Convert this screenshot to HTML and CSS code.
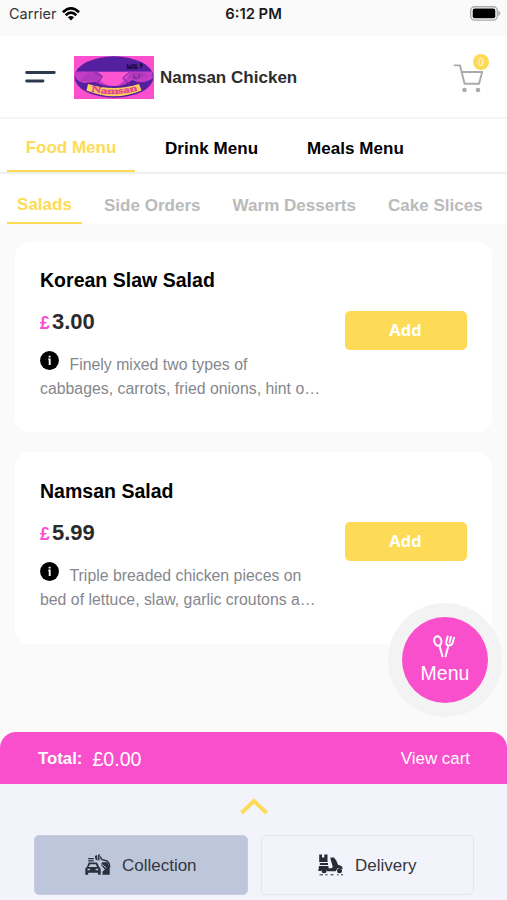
FILE: index.html
```html
<!DOCTYPE html>
<html lang="en">
<head>
<meta charset="utf-8">
<title>Namsan Chicken</title>
<link rel="stylesheet" href="styles.css">
</head>
<body>
<div class="app">
  <div class="status">
    <div class="carrier">
      <span>Carrier</span>
      <svg width="18" height="14" viewBox="0 0 18 14" fill="none" stroke="#000" stroke-width="2.6"><path d="M.9 5.3Q9-2.4 17.1 5.3M3.7 8.2Q9 3.2 14.3 8.2"/><path d="M5.9 10.3Q9 7.5 12.1 10.3L9 13.4Z" fill="#000" stroke="none"/></svg>
    </div>
    <span class="clock">6:12 PM</span>
    <svg class="battery" width="31" height="15" viewBox="0 0 31 15"><rect x=".7" y=".7" width="26.6" height="13.4" rx="4" fill="#fff" stroke="#aaa" stroke-width="1.4"/><rect x="2.7" y="2.6" width="22.6" height="9.6" rx="2" fill="#000"/><path d="M28.3 4.8Q30.3 5.5 30.3 7.4T28.3 10Z" fill="#aaa"/></svg>
  </div>

  <header class="header">
    <svg class="burger" width="31" height="14" viewBox="0 0 31 14" stroke="#2b3b4c" stroke-width="2.8" stroke-linecap="round"><path d="M1.6 2.5H29.3M1.6 11H18"/></svg>
    <svg class="logo" width="80" height="43" viewBox="0 0 80 43">
      <rect width="80" height="43" fill="#fc4fcf"/>
      <ellipse cx="40" cy="21" rx="39.5" ry="20.7" fill="#54209f"/>
      <path d="M2 15.5H78L79 22Q73 27 64 26L58 24Q52 29 44 30H36Q29 30 22 26L10 27Q1 25 1 19Z" fill="#c43cc4"/>
      <path d="M20 16H57Q51 24 45 29Q37 32 28 26Q23 21 20 16Z" fill="#fb55d0"/>
      <path d="M14 17L24 16 29 20 20 25H6ZM57 17L67 16 74 19 63 24 54 22Z" fill="#b03abb"/>
      <path d="M21 16L28 21 22 28M56 16L49 22 55 28" fill="none" stroke="#8a2bb0" stroke-width="1.2"/>
      <path d="M14 28Q40 36 65 28L67.500 34.500Q40 46 12.500 34.500Z" fill="#fbd35b"/>
      <path id="curve" d="M17 35.300Q40 41 65 34.300" fill="none"/>
      <text class="logo-name"><textPath href="#curve" textLength="47" lengthAdjust="spacingAndGlyphs">Namsan</textPath></text>
      <path d="M53.500 8V12H58V8M55.500 9V12M60 8V12H64M62 8V11M67 7V12M66 9H69" fill="none" stroke="#170d33" stroke-width="1.3"/>
      <path d="M60 19V22H63M65 18V22" fill="none" stroke="#632086" stroke-width="1"/>
    </svg>
    <h1 class="brand">Namsan Chicken</h1>
    <div class="cart">
      <svg width="31" height="31" viewBox="0 0 31 31" fill="none" stroke="#aaa" stroke-width="1.9" stroke-linejoin="round" stroke-linecap="round"><path d="M1.500 2.400H7L11.600 20.800H26L29.200 9H8.700"/><circle cx="11.500" cy="27" r="2.300" fill="#aaa" stroke="none"/><circle cx="25" cy="27" r="2.300" fill="#aaa" stroke="none"/></svg>
      <span class="badge">0</span>
    </div>
  </header>

  <nav class="tabs">
    <a class="tab active">Food Menu</a>
    <a class="tab">Drink Menu</a>
    <a class="tab">Meals Menu</a>
  </nav>
  <nav class="subtabs">
    <a class="subtab active">Salads</a>
    <a class="subtab">Side Orders</a>
    <a class="subtab">Warm Desserts</a>
    <a class="subtab">Cake Slices</a>
  </nav>

  <main class="list">
    <article class="card">
      <div class="info">
        <h2 class="name">Korean Slaw Salad</h2>
        <div class="price"><span class="currency">£</span>3.00</div>
        <p class="desc"><svg class="i" width="19" height="19" viewBox="0 0 19 19"><circle cx="9.5" cy="9.5" r="9.4"/><path d="M9.600 4.700V6.500M8.300 8.400H9.700V14" fill="none" stroke="#fff" stroke-width="1.900"/></svg>Finely mixed two types of<br>cabbages, carrots, fried onions, hint o…</p>
      </div>
      <button class="add">Add</button>
    </article>
    <article class="card second">
      <div class="info">
        <h2 class="name">Namsan Salad</h2>
        <div class="price"><span class="currency">£</span>5.99</div>
        <p class="desc"><svg class="i" width="19" height="19" viewBox="0 0 19 19"><circle cx="9.5" cy="9.5" r="9.4"/><path d="M9.600 4.700V6.500M8.300 8.400H9.700V14" fill="none" stroke="#fff" stroke-width="1.900"/></svg>Triple breaded chicken pieces on<br>bed of lettuce, slaw, garlic croutons a…</p>
      </div>
      <button class="add">Add</button>
    </article>
  </main>

  <button class="fab">
    <span class="fab-core">
      <svg width="22" height="23" viewBox="0 0 22 23" fill="none" stroke="#fff" stroke-width="2" stroke-linecap="round" stroke-linejoin="round"><ellipse cx="4.800" cy="6" rx="3.500" ry="4.700" transform="rotate(-15 4.800 6)"/><path d="M6.400 10.600L9.400 21.300M14.600 1.400L13.200 7Q13 10.200 15.400 10.500Q18.500 10.700 19.700 7.800L21 2.700M17.800 2L16.600 7.400M15.400 10.800L12.600 21.300"/></svg>
      <span>Menu</span>
    </span>
  </button>

  <div class="cartbar">
    <span class="total-label">Total:</span>
    <span class="total">£0.00</span>
    <a class="view">View cart</a>
  </div>
  <footer class="bottom">
    <svg class="chevron" width="28" height="17" viewBox="0 0 28 17" fill="none" stroke="#fddb57" stroke-width="4"><path d="M1.500 16L14 4L26.500 16"/></svg>
    <div class="modes">
      <button class="mode selected">
        <svg width="26" height="22" viewBox="0 0 26 22"><path d="M3.2 4H8.7V5.3H3.2ZM3.2 6.3H8.7V7.6H3.2ZM9.8 2L12 1 12.4 6.5 10.5 5.5ZM13 .8L14.8 0 14.3 6.8 12.8 6.1ZM3.7 8.5H12L14.4 13.2 15.7 15V20.7H13V18.8H3.2V20.7H.3V14.4L2 12.7ZM5 10.2L3.5 13H12L10.8 10.2Z" fill="#29313e" fill-rule="evenodd"/><path d="M2.5 15.5H5M10.7 15.5H13.2" stroke="#bec6dc" stroke-width="1.5"/><path d="M15.5 2.5Q15.7 6 19.5 6.3Q24.7 6.7 24.7 13.5" fill="none" stroke="#29313e" stroke-width="1.4"/><path d="M17 8.2H22.3L24.7 13V20.7H17.5V17.5L20 15.5 16 11.2Z" fill="#29313e"/><path d="M16.5 10.8L18.800 11.600 21.300 14.200" stroke="#bec6dc" fill="none"/></svg>
        <span>Collection</span>
      </button>
      <button class="mode">
        <svg width="26" height="22" viewBox="0 0 26 22" fill="#292c36"><path d="M1.2 .5H4V3.5H6.3V.5H9.500V8H1.200ZM1.800 9H10V11H1.800ZM1 12H10.500V14.300H13.500L14.800 13 12.500 5V3.500H16L18.500 7 20 10.800 23.500 12 25 14.800H22L20 13.800 17.500 17.300H9.300A3.500 3.500 0 0 0 3 17H.3Z"/><circle cx="6.100" cy="16.800" r="2.500"/><circle cx="21.500" cy="16.800" r="2.500"/><path d="M1.500 20.800H5M7.500 20.800H9.500M12.500 20.800H15.500M19 20.800H20.500M23 20.800H25" stroke="#292c36" stroke-width="1"/></svg>
        <span>Delivery</span>
      </button>
    </div>
  </footer>
</div>
</body>
</html>
```
FILE: styles.css
```css
* { box-sizing: border-box; }
body { margin: 0; font-family: "Liberation Sans", Arial, sans-serif; background: #fafafa; }
button { border: 0; font: inherit; padding: 0; }
h1, h2, p { margin: 0; }
svg { display: block; flex: none; }
.app { position: relative; width: 507px; height: 900px; overflow: hidden; display: flex; flex-direction: column; background: #fafafa; }

.status { height: 36px; flex: none; padding: 0 6px 9px 9px; display: grid; grid-template-columns: 1fr auto 1fr; align-items: center; font-family: Inter, sans-serif; }
.carrier { display: flex; align-items: center; gap: 6px; font-size: 14.5px; color: #333; }
.carrier svg { margin-left: -1px; }
.clock { font-size: 14.8px; font-weight: 600; color: #1a1a1a; margin-right: 3px; }
.battery { justify-self: end; }

.header { height: 83px; flex: none; background: #fff; border-bottom: 2px solid #f5f5f5; display: flex; align-items: center; padding: 1px 18px 0 25px; }
.burger { margin-right: 18px; }
.logo { margin-right: 6px; }
.logo-name { font: bold 9px "Liberation Serif", serif; fill: #e44897; stroke: #e44897; stroke-width: .4px; }
.brand { font-size: 17px; line-height: 20px; padding-top: 1px; color: #2d2d2d; letter-spacing: .02px; }
.cart { position: relative; margin-left: auto; width: 36px; height: 31px; }
.cart svg { margin-top: 1px; }
.badge { position: absolute; left: 20px; top: -8px; width: 16px; height: 16px; border-radius: 50%; background: #fddb57; color: #fffbd9; font-size: 10px; line-height: 18px; text-align: center; }

.tabs { height: 55px; flex: none; background: #fff; border-bottom: 2px solid #eee; display: flex; padding-left: 7px; font-weight: bold; font-size: 17px; }
.tab { padding-top: 20px; line-height: 20px; margin-right: 49px; letter-spacing: .05px; }
.tab.active { width: 128px; padding-top: 19px; text-align: center; color: #fddb57; border-bottom: 2px solid #fddb57; margin-right: 30px; letter-spacing: 0; }
.subtabs { height: 50px; flex: none; background: #fff; display: flex; gap: 32px; padding-left: 7px; font-weight: bold; font-size: 17px; color: #bababa; white-space: nowrap; }
.subtab { padding-top: 22px; line-height: 20px; letter-spacing: .02px; }
.subtab.active { width: 75px; margin-right: -10px; padding-top: 21px; text-align: center; color: #fddb57; border-bottom: 2px solid #fddb57; }

.list { flex: 1; min-height: 0; padding: 18px 15px 0; display: flex; flex-direction: column; gap: 20px; }
.card { height: 190px; flex: none; background: #fff; border-radius: 14px; padding: 26px 25px 0; display: flex; }
.card.second { height: 192px; padding-top: 27px; }
.info { width: 304.500px; flex: none; }
.name { font-size: 19.500px; line-height: 24px; color: #000; letter-spacing: .02px; }
.price { margin-top: 17px; font-size: 22px; line-height: 26px; font-weight: bold; color: #2b2b2b; }
.currency { display: inline-block; width: 12px; font-size: 17.500px; color: #fb4ed0; }
.desc { margin-top: 15px; font-size: 15.800px; line-height: 24.400px; color: #85878c; white-space: nowrap; letter-spacing: .02px; }
.i { display: inline-block; margin-right: 10.500px; vertical-align: 0; }
.add { margin-top: 43px; width: 122px; height: 39px; padding-bottom: 2px; border-radius: 5px; background: #fddb57; color: #fff; font: bold 16.500px "Open Sans", sans-serif; }

.fab { position: absolute; left: 388px; top: 603px; width: 114px; height: 114px; border-radius: 50%; background: #f3f3f3; display: grid; place-items: center; }
.fab-core { width: 86px; height: 86px; border-radius: 50%; background: #fa4fcc; color: #fff; font-size: 19.500px; line-height: 22px; display: flex; flex-direction: column; align-items: center; padding-top: 18px; gap: 4px; }
.fab-core svg { margin-right: 2px; }

.cartbar { height: 52px; flex: none; background: #fa4fcc; border-radius: 16px 16px 0 0; color: #fff; display: flex; align-items: center; padding: 2px 37px 0 38px; }
.total-label { font-size: 16.800px; font-weight: bold; margin-right: 10px; }
.total { font-size: 19.600px; }
.view { margin-left: auto; font-size: 16.900px; }
.bottom { height: 116px; flex: none; background: #f2f3fb; padding: 13px 33px 0 34px; }
.chevron { margin: 0 auto; }
.modes { display: flex; gap: 13px; margin-top: 21px; }
.mode { width: 213.500px; height: 60px; border-radius: 5px; border: 1px solid #e6e6ec; background: #f3f4fb; color: #35373d; font-size: 17px; display: flex; align-items: center; justify-content: center; gap: 11px; }
.mode span { padding-top: 1px; }
.mode.selected { background: #bec6dc; border-color: #c6cde0; }
```
